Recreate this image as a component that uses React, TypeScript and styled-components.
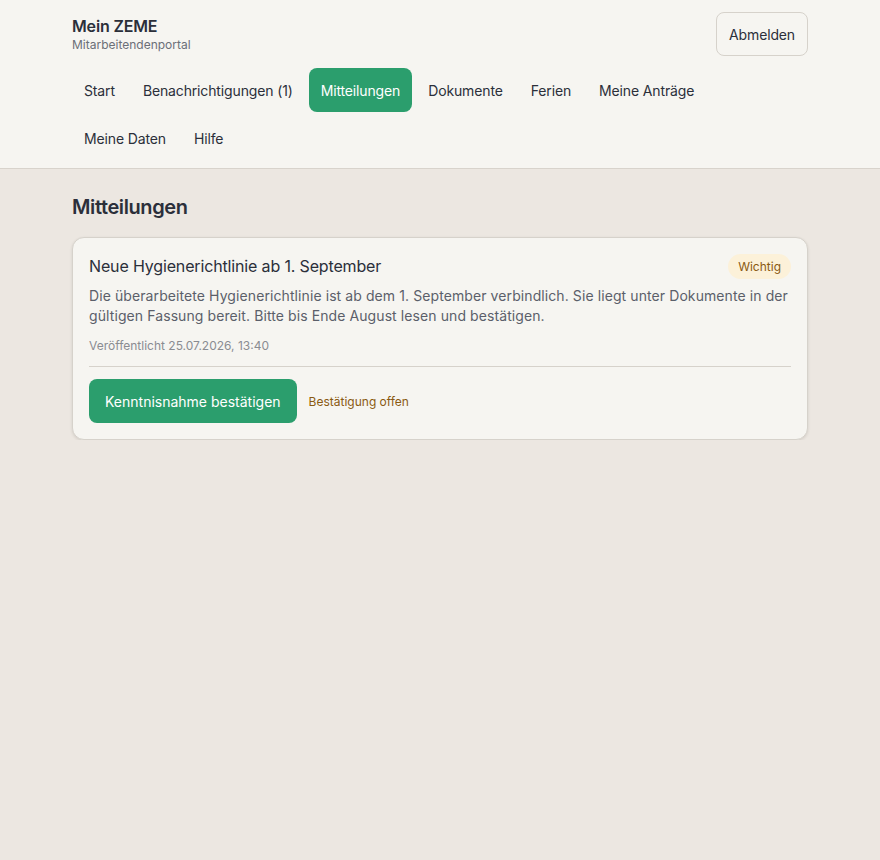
import styled, { createGlobalStyle } from 'styled-components';

const navItems = [
  'Start',
  'Benachrichtigungen (1)',
  'Mitteilungen',
  'Dokumente',
  'Ferien',
  'Meine Anträge',
  'Meine Daten',
  'Hilfe',
];

const GlobalStyle = createGlobalStyle`
  * {
    box-sizing: border-box;
  }
  html, body {
    margin: 0;
    padding: 0;
    background: #ece7e1;
    font-family: Inter, 'Noto Sans', 'Liberation Sans', sans-serif;
    color: #2b2f3a;
  }
  p, h1, h2 {
    margin: 0;
  }
`;

const App = () => {
  const active = 'Mitteilungen';

  return (
    <>
      <GlobalStyle />
      <Header>
        <Container>
          <TopRow>
            <Brand>
              <BrandTitle>Mein ZEME</BrandTitle>
              <BrandSub>Mitarbeitendenportal</BrandSub>
            </Brand>
            <LogoutButton>Abmelden</LogoutButton>
          </TopRow>
          <Nav>
            {navItems.map((item) => (
              <NavItem key={item} $active={item === active}>
                {item}
              </NavItem>
            ))}
          </Nav>
        </Container>
      </Header>
      <Main>
        <Container>
          <PageTitle>Mitteilungen</PageTitle>
          <Card>
            <CardHead>
              <CardTitle>Neue Hygienerichtlinie ab 1. September</CardTitle>
              <Badge>Wichtig</Badge>
            </CardHead>
            <CardBody>
              Die überarbeitete Hygienerichtlinie ist ab dem 1. September verbindlich. Sie liegt
              unter Dokumente in der gültigen Fassung bereit. Bitte bis Ende August lesen und
              bestätigen.
            </CardBody>
            <Meta>Veröffentlicht 25.07.2026, 13:40</Meta>
            <CardFooter>
              <PrimaryButton>Kenntnisnahme bestätigen</PrimaryButton>
              <Status>Bestätigung offen</Status>
            </CardFooter>
          </Card>
        </Container>
      </Main>
    </>
  );
};

export default App;

const Container = styled.div`
  max-width: 768px;
  margin: 0 auto;
  padding: 0 16px;
`;

const Header = styled.header`
  background: #f6f5f1;
  border-bottom: 1px solid #d8d3cc;
  padding: 12px 0 8px;
`;

const TopRow = styled.div`
  display: flex;
  justify-content: space-between;
  align-items: center;
  height: 44px;
`;

const Brand = styled.div`
  display: flex;
  flex-direction: column;
`;

const BrandTitle = styled.p`
  font-size: 16px;
  line-height: 22px;
  font-weight: 600;
  letter-spacing: -0.01em;
  color: #2b2f3a;
`;

const BrandSub = styled.p`
  font-size: 12px;
  line-height: 16px;
  color: #6b6f78;
`;

const LogoutButton = styled.button`
  height: 44px;
  padding: 0 12px;
  border: 1px solid #d6d2cb;
  border-radius: 8px;
  background: #f6f5f1;
  font-family: inherit;
  font-size: 14px;
  letter-spacing: -0.01em;
  color: #2b2f3a;
  cursor: pointer;
`;

const Nav = styled.nav`
  display: flex;
  flex-wrap: wrap;
  gap: 4px;
  margin-top: 12px;
`;

const NavItem = styled.a<{ $active?: boolean }>`
  display: flex;
  align-items: center;
  height: 44px;
  padding: 0 12px;
  border-radius: 8px;
  font-size: 14px;
  letter-spacing: -0.01em;
  color: ${({ $active }) => ($active ? '#ffffff' : '#2b2f3a')};
  background: ${({ $active }) => ($active ? '#2b9e6d' : 'transparent')};
  cursor: pointer;
`;

const Main = styled.main`
  padding-top: 24px;
`;

const PageTitle = styled.h1`
  font-size: 20px;
  line-height: 28px;
  font-weight: 600;
  letter-spacing: -0.02em;
  color: #2b2f3a;
  margin-bottom: 16px;
`;

const Card = styled.section`
  background: #f6f5f1;
  border: 1px solid #d6d2cb;
  border-radius: 12px;
  padding: 16px;
  box-shadow: 0 1px 3px rgba(40, 35, 25, 0.12);
`;

const CardHead = styled.div`
  display: flex;
  justify-content: space-between;
  align-items: flex-start;
`;

const CardTitle = styled.h2`
  font-size: 16px;
  line-height: 24px;
  font-weight: 400;
  letter-spacing: -0.15px;
  color: #2b2f3a;
`;

const Badge = styled.span`
  display: inline-flex;
  align-items: center;
  height: 25px;
  padding: 0 10px;
  border-radius: 999px;
  background: #fcf1d9;
  color: #8a5a12;
  font-size: 12px;
`;

const CardBody = styled.p`
  margin-top: 7px;
  font-size: 14px;
  line-height: 20px;
  letter-spacing: 0.09px;
  color: #5b5f6a;
`;

const Meta = styled.p`
  margin-top: 12px;
  padding-bottom: 12px;
  border-bottom: 1px solid #d6d2cb;
  font-size: 12px;
  line-height: 16px;
  color: #8a8c91;
`;

const CardFooter = styled.div`
  display: flex;
  align-items: center;
  gap: 12px;
  margin-top: 12px;
`;

const PrimaryButton = styled.button`
  height: 44px;
  padding: 0 16px;
  border: none;
  border-radius: 8px;
  background: #2b9e6d;
  color: #ffffff;
  font-family: inherit;
  font-size: 14px;
  cursor: pointer;
`;

const Status = styled.span`
  font-size: 12px;
  color: #8a5a12;
`;
